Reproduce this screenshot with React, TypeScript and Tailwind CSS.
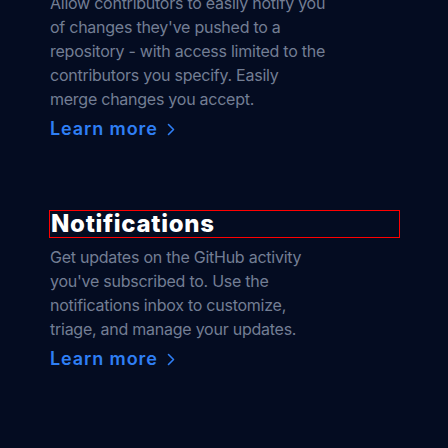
import React from "react";

function LearnMore() {
  return (
    <a className="mt-[6px] flex items-center gap-[9px] text-[18px] leading-[24px] font-semibold tracking-[0.9px] text-[#2f7ff5]" href="#">
      <span>Learn more</span>
      <svg width="8" height="13" viewBox="0 0 8 13" fill="none">
        <path d="M1.5 1.5 L6.5 6.5 L1.5 11.5" stroke="#2f7ff5" strokeWidth="1.6" strokeLinecap="round" strokeLinejoin="round" />
      </svg>
    </a>
  );
}

export default function App() {
  const para = "w-[320px] text-[16px] leading-[24px] tracking-[-0.25px] text-[#737e94]";
  return (
    <div className="w-[448px] h-[448px] overflow-hidden bg-[#040c21]" style={{ fontFamily: "Inter, 'Noto Sans', sans-serif" }}>
      <div className="pl-[50px] -mt-[9px] flex flex-col">
        <p className={para}>
          Allow contributors to easily notify you<br />
          of changes they've pushed to a<br />
          repository - with access limited to the<br />
          contributors you specify. Easily<br />
          merge changes you accept.
        </p>
        <LearnMore />
        <div className="mt-[69px] -ml-[1px] w-[351px] h-[28px] border border-[#ff0000] flex items-center">
          <h3 className="pl-[1px] text-[24px] leading-[28px] font-extrabold text-white tracking-[0.7px]">Notifications</h3>
        </div>
        <p className={"mt-[7px] " + para}>
          Get updates on the GitHub activity<br />
          you've subscribed to. Use the<br />
          notifications inbox to customize,<br />
          triage, and manage your updates.
        </p>
        <LearnMore />
      </div>
    </div>
  );
}
